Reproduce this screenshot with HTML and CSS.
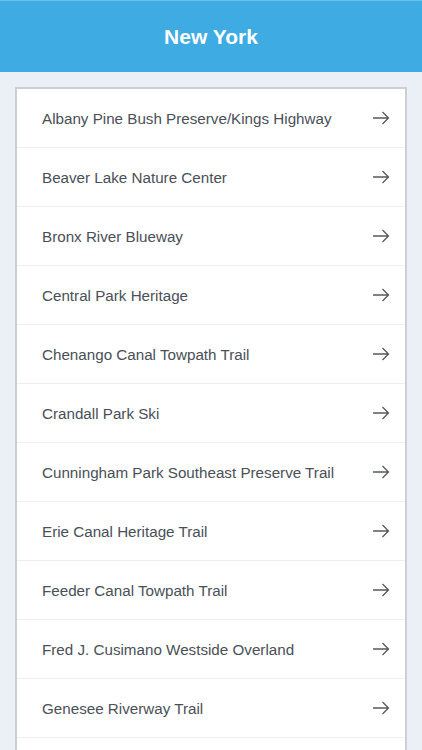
FILE: index.html
```html
<!DOCTYPE html>
<html lang="en">
<head>
    <meta charset="UTF-8">
    <meta name="viewport" content="width=device-width, initial-scale=1.0">
    <title>New York</title>
    <link rel="stylesheet" href="styles.css">
</head>
<body>
    <header class="topbar">
        <h1>New York</h1>
    </header>
    <div class="card">
        <ul class="trails">
            <li><span>Albany Pine Bush Preserve/Kings Highway</span><svg class="arrow" viewBox="0 0 18 14"><path d="M1 7H16.5M10.5 1L16.5 7L10.5 13"/></svg></li>
            <li><span>Beaver Lake Nature Center</span><svg class="arrow" viewBox="0 0 18 14"><path d="M1 7H16.5M10.5 1L16.5 7L10.5 13"/></svg></li>
            <li><span>Bronx River Blueway</span><svg class="arrow" viewBox="0 0 18 14"><path d="M1 7H16.5M10.5 1L16.5 7L10.5 13"/></svg></li>
            <li><span>Central Park Heritage</span><svg class="arrow" viewBox="0 0 18 14"><path d="M1 7H16.5M10.5 1L16.5 7L10.5 13"/></svg></li>
            <li><span>Chenango Canal Towpath Trail</span><svg class="arrow" viewBox="0 0 18 14"><path d="M1 7H16.5M10.5 1L16.5 7L10.5 13"/></svg></li>
            <li><span>Crandall Park Ski</span><svg class="arrow" viewBox="0 0 18 14"><path d="M1 7H16.5M10.5 1L16.5 7L10.5 13"/></svg></li>
            <li><span>Cunningham Park Southeast Preserve Trail</span><svg class="arrow" viewBox="0 0 18 14"><path d="M1 7H16.5M10.5 1L16.5 7L10.5 13"/></svg></li>
            <li><span>Erie Canal Heritage Trail</span><svg class="arrow" viewBox="0 0 18 14"><path d="M1 7H16.5M10.5 1L16.5 7L10.5 13"/></svg></li>
            <li><span>Feeder Canal Towpath Trail</span><svg class="arrow" viewBox="0 0 18 14"><path d="M1 7H16.5M10.5 1L16.5 7L10.5 13"/></svg></li>
            <li><span>Fred J. Cusimano Westside Overland</span><svg class="arrow" viewBox="0 0 18 14"><path d="M1 7H16.5M10.5 1L16.5 7L10.5 13"/></svg></li>
            <li><span>Genesee Riverway Trail</span><svg class="arrow" viewBox="0 0 18 14"><path d="M1 7H16.5M10.5 1L16.5 7L10.5 13"/></svg></li>
            <li></li>
        </ul>
    </div>
</body>
</html>
```

FILE: styles.css
```css
body {
    font-family: "Liberation Sans", Arial, sans-serif;
    margin: 0;
    padding: 0;
    background: #ebeff6;
    color: #4a4f58;
    height: 750px;
    overflow: hidden;
}

.topbar {
    height: 72px;
    background: #3eabe2;
    border-top: 1px solid #6cc0ec;
    box-sizing: border-box;
    display: flex;
    justify-content: center;
    align-items: center;
}

.topbar h1 {
    margin: 0;
    color: #fff;
    font-size: 21px;
    font-weight: bold;
}

.card {
    margin: 15px 15px 0 15px;
    background: #fff;
    border: 2px solid #cbcfd6;
    border-bottom: none;
}

.trails {
    list-style: none;
    margin: 0;
    padding: 0;
}

.trails li {
    height: 59px;
    box-sizing: border-box;
    display: flex;
    align-items: center;
    justify-content: space-between;
    padding: 0 15px 0 25px;
    border-bottom: 1px solid #eceef1;
    font-size: 15.2px;
}

.arrow {
    width: 18px;
    height: 14px;
    fill: none;
    stroke: #55595f;
    stroke-width: 1.3;
}
```
